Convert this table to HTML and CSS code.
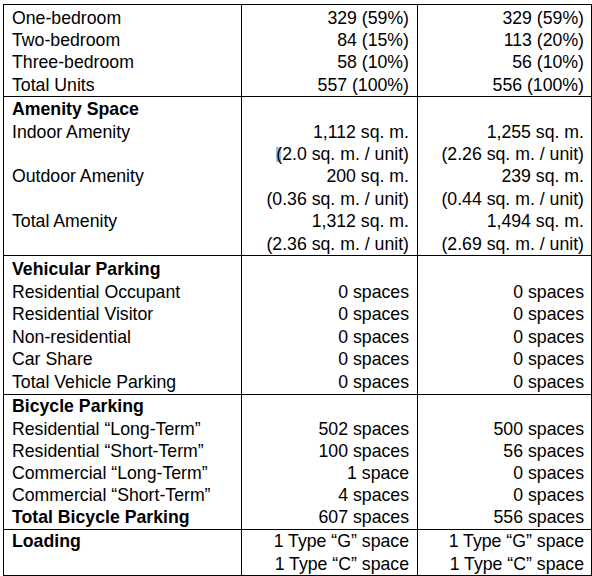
FILE: index.html
```html
<!DOCTYPE html>
<html>
<head>
<meta charset="utf-8">
<link rel="stylesheet" href="styles.css">
</head>
<body>
<table class="stats">
  <colgroup>
    <col class="c1">
    <col class="c2">
    <col class="c3">
  </colgroup>
  <tr class="s1">
    <td class="label">One-bedroom<br>Two-bedroom<br>Three-bedroom<br>Total Units</td>
    <td class="num n2">329 (59%)<br>84 (15%)<br>58 (10%)<br>557 (100%)</td>
    <td class="num n3">329 (59%)<br>113 (20%)<br>56 (10%)<br>556 (100%)</td>
  </tr>
  <tr class="s2">
    <td class="label"><b>Amenity Space</b><br>Indoor Amenity<br><br>Outdoor Amenity<br><br>Total Amenity<br>&nbsp;</td>
    <td class="num n2">&nbsp;<br>1,112 sq. m.<br><span class="sel">(</span>2.0 sq. m. / unit)<br>200 sq. m.<br>(0.36 sq. m. / unit)<br>1,312 sq. m.<br>(2.36 sq. m. / unit)</td>
    <td class="num n3">&nbsp;<br>1,255 sq. m.<br>(2.26 sq. m. / unit)<br>239 sq. m.<br>(0.44 sq. m. / unit)<br>1,494 sq. m.<br>(2.69 sq. m. / unit)</td>
  </tr>
  <tr class="s3">
    <td class="label"><b>Vehicular Parking</b><br>Residential Occupant<br>Residential Visitor<br>Non-residential<br>Car Share<br>Total Vehicle Parking</td>
    <td class="num n2">&nbsp;<br>0 spaces<br>0 spaces<br>0 spaces<br>0 spaces<br>0 spaces</td>
    <td class="num n3">&nbsp;<br>0 spaces<br>0 spaces<br>0 spaces<br>0 spaces<br>0 spaces</td>
  </tr>
  <tr class="s4">
    <td class="label"><b>Bicycle Parking</b><br>Residential “Long-Term”<br>Residential “Short-Term”<br>Commercial “Long-Term”<br>Commercial “Short-Term”<br><b>Total Bicycle Parking</b></td>
    <td class="num n2">&nbsp;<br>502 spaces<br>100 spaces<br>1 space<br>4 spaces<br>607 spaces</td>
    <td class="num n3">&nbsp;<br>500 spaces<br>56 spaces<br>0 spaces<br>0 spaces<br>556 spaces</td>
  </tr>
  <tr class="s5">
    <td class="label"><b>Loading</b><br>&nbsp;</td>
    <td class="num n2">1 Type “G” space<br>1 Type “C” space</td>
    <td class="num n3">1 Type “G” space<br>1 Type “C” space</td>
  </tr>
</table>
</body>
</html>
```

FILE: styles.css
```css
html {
  margin: 0;
  padding: 0;
  background: #fff;
}
body {
  margin: 0;
  padding: 4px 0 0 3px;
  font-family: "Liberation Sans", Arial, sans-serif;
  font-size: 17.7px;
  line-height: 22.4px;
  color: #000;
}
.stats {
  border-collapse: collapse;
  table-layout: fixed;
  width: 588px;
}
.c1 { width: 238px; }
.c2 { width: 176px; }
.c3 { width: 174px; }
.stats td {
  border: 1px solid #000;
  vertical-align: top;
  padding: 1.5px 0 0 0;
  white-space: nowrap;
}
.label { padding-left: 8px !important; }
.num { text-align: right; }
.n2 { padding-right: 8px !important; }
.n3 { padding-right: 7px !important; }
.s2 td { padding-top: 1px; }
.s3 td { padding-top: 2.5px; padding-bottom: 1px; }
.s4 td { padding-top: 0.5px; line-height: 22.2px; }
.s5 td { padding-top: 0.5px; }
.sel {
  position: relative;
}
.sel::before {
  content: "";
  position: absolute;
  left: 0;
  top: 3px;
  width: 5px;
  height: 15px;
  background: #9cbedd;
  z-index: -1;
}
```
